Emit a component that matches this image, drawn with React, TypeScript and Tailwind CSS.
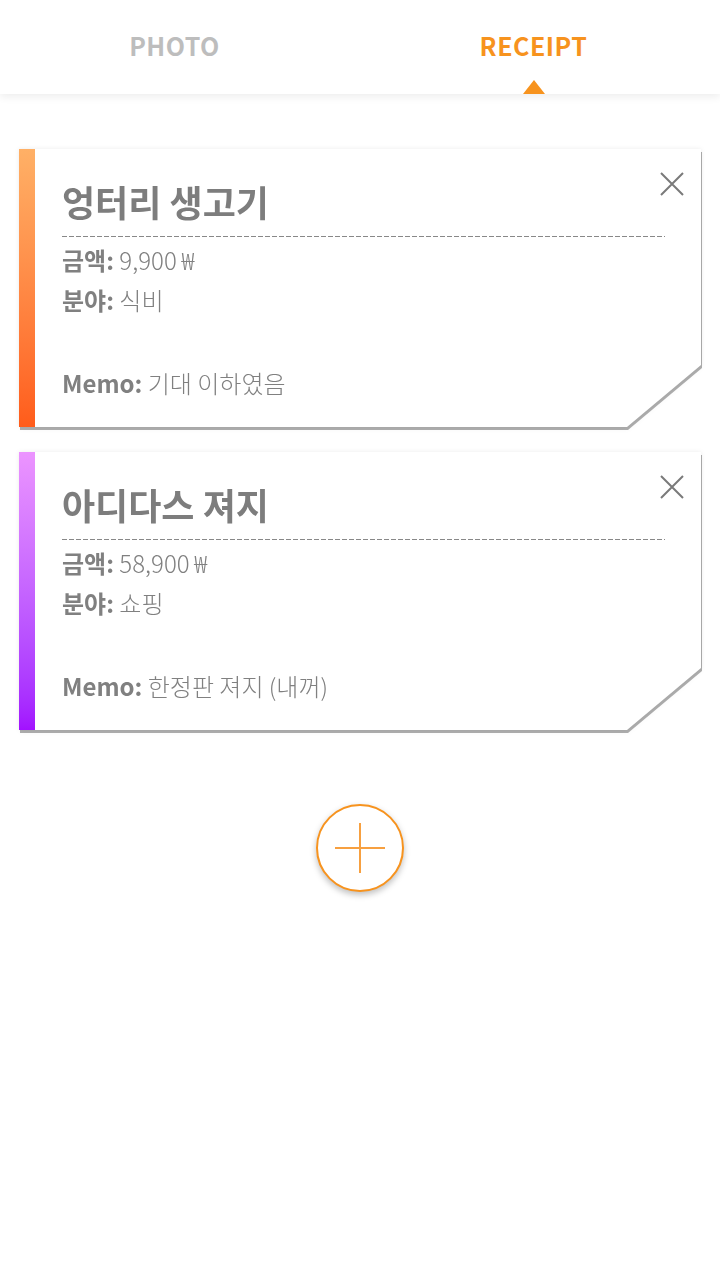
import React from 'react';

type Receipt = {
  title: string;
  amount: string;
  category: string;
  memo: string;
  bar: string;
};

const receipts: Receipt[] = [
  {
    title: '엉터리 생고기',
    amount: '9,900\u2009₩',
    category: '식비',
    memo: '기대 이하였음',
    bar: 'bg-gradient-to-b from-[#ffb066] to-[#ff5c1a]',
  },
  {
    title: '아디다스 져지',
    amount: '58,900\u2009₩',
    category: '쇼핑',
    memo: '한정판 져지 (내꺼)',
    bar: 'bg-gradient-to-b from-[#ec94ff] to-[#a210ff]',
  },
];

const ReceiptCard = ({ item }: { item: Receipt }) => (
  <div className="mx-[19px] [filter:drop-shadow(0_0_2px_rgba(0,0,0,0.08))_drop-shadow(1px_3px_0.5px_rgba(0,0,0,0.32))]">
    <div className="relative flex h-[278px] bg-white [clip-path:polygon(0_0,100%_0,100%_calc(100%_-_62px),calc(100%_-_74px)_100%,0_100%)]">
      <div className={`w-4 shrink-0 ${item.bar}`} />
      <div className="flex-1 pl-[27px] pr-[36px] pt-[30px]">
        <h2 className="text-[36px] leading-[44px] font-bold text-[#7d7d7d]">{item.title}</h2>
        {/* 점선 구분선 */}
        <div className="mt-[13px] h-px bg-[repeating-linear-gradient(90deg,#888_0_5px,transparent_5px_7px)]" />
        <div className="mt-[3px] text-[24px] leading-[40px] text-[#808080]">
          <p>
            <span className="font-bold">금액:</span> <span className="font-light">{item.amount}</span>
          </p>
          <p>
            <span className="font-bold">분야:</span> <span className="font-light">{item.category}</span>
          </p>
          <p className="mt-[43px]">
            <span className="font-bold">Memo:</span> <span className="font-light">{item.memo}</span>
          </p>
        </div>
      </div>
      <button className="absolute top-[23px] right-[17px] text-[#7a7a7a]" aria-label="삭제">
        <svg width="24" height="24" viewBox="0 0 24 24" fill="none" stroke="currentColor" strokeWidth="2">
          <path d="M1 1 L23 23 M23 1 L1 23" />
        </svg>
      </button>
    </div>
  </div>
);

export default function App() {
  return (
    <div className="min-h-[1280px] bg-white font-['Noto_Sans_CJK_KR','Noto_Sans',sans-serif]">
      {/* 상단 탭 */}
      <div className="relative flex h-[94px] bg-white shadow-[0_3px_8px_rgba(0,0,0,0.07)]">
        <div className="flex flex-1 items-center justify-center pr-[10px] pb-[2px] text-[25px] font-bold tracking-[0.5px] text-[#bdbdbd]">
          PHOTO
        </div>
        <div className="relative flex flex-1 items-center justify-center pr-[12px] pb-[2px] text-[25px] font-bold tracking-[0.5px] text-[#f7931e]">
          RECEIPT
          <div className="absolute bottom-0 left-[164px] h-0 w-0 border-x-[11px] border-b-[14px] border-x-transparent border-b-[#f7931e]" />
        </div>
      </div>

      <div className="flex flex-col gap-[25px] pt-[55px]">
        {receipts.map((r, i) => (
          <ReceiptCard key={i} item={r} />
        ))}
      </div>

      <div className="mt-[74px] flex justify-center">
        <button
          className="flex h-[88px] w-[88px] items-center justify-center rounded-full border-2 border-[#f7931e] bg-white shadow-[0_3px_6px_rgba(0,0,0,0.25)]"
          aria-label="추가"
        >
          <svg width="50" height="50" viewBox="0 0 50 50" stroke="#f7a040" strokeWidth="2">
            <path d="M0 25 H50 M25 0 V50" />
          </svg>
        </button>
      </div>
    </div>
  );
}
